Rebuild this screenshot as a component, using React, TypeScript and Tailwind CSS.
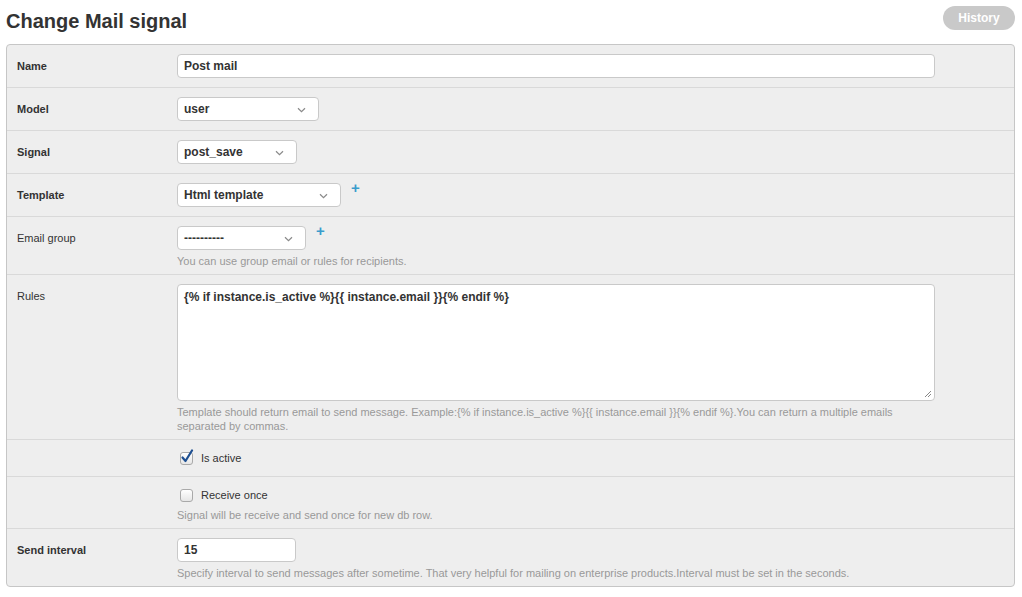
import React from "react";

const font = { fontFamily: '"Liberation Sans", Arial, sans-serif' };

function Chevron() {
  return (
    <svg width="9" height="6" viewBox="0 0 9 6" className="absolute right-[12px] top-[9px]">
      <path d="M1 1.2 L4.5 4.6 L8 1.2" fill="none" stroke="#8a8a8a" strokeWidth="1.2" />
    </svg>
  );
}

function Select({ value, width }: { value: string; width: string }) {
  return (
    <div className={`relative h-[24px] ${width} rounded-[4px] border border-[#c9c9c9] bg-white pl-[6px] text-[12px] font-bold leading-[22px] text-[#333]`}>
      {value}
      <Chevron />
    </div>
  );
}

function Plus() {
  return <span className="ml-[10px] -mt-[3px] text-[15px] font-bold leading-[15px] text-[#3a9ccc]">+</span>;
}

function Help({ children }: { children: React.ReactNode }) {
  return <p className="mt-[4px] max-w-[758px] text-[11px] leading-[14px] text-[#999]">{children}</p>;
}

function Row({ label, bold = true, last = false, children, pb = "pb-[9px]" }: { label: string; bold?: boolean; last?: boolean; children: React.ReactNode; pb?: string }) {
  return (
    <div className={`flex px-[10px] pt-[9px] ${pb} ${last ? "" : "border-b border-[#d9d9d9]"}`}>
      <div className={`w-[160px] shrink-0 text-[11px] leading-[24px] text-[#333] ${bold ? "font-bold" : ""}`}>{label}</div>
      <div className="flex-1">{children}</div>
    </div>
  );
}

function Checkbox({ checked }: { checked?: boolean }) {
  return (
    <span className="relative ml-[3px] inline-block h-[13px] w-[13px] rounded-[3px] border border-[#a9a9a9] bg-gradient-to-b from-white to-[#e6e6e6]">
      {checked && (
        <svg width="14" height="15" viewBox="0 0 14 15" className="absolute -left-[1px] -top-[4px]">
          <path d="M2.5 8.5 L5.5 12 L12 1.5" fill="none" stroke="#1d4f91" strokeWidth="2.2" strokeLinecap="round" strokeLinejoin="round" />
        </svg>
      )}
    </span>
  );
}

const rulesText = "{% if instance.is_active %}{{ instance.email }}{% endif %}";

export default function App() {
  return (
    <div className="min-h-[597px] bg-white px-[6px]" style={font}>
      <div className="flex h-[44px] items-start justify-between">
        <h1 className="pt-[9px] text-[20px] font-bold leading-[24px] text-[#333]">Change Mail signal</h1>
        <button className="mt-[6px] mr-[1px] h-[24px] w-[72px] rounded-full bg-[#c9c9c9] text-[12px] font-bold text-white">History</button>
      </div>
      <div className="w-[1009px] rounded-[4px] border border-[#c6c6c6] bg-[#eeeeee]">
        <Row label="Name">
          <div className="h-[24px] w-[758px] rounded-[4px] border border-[#c9c9c9] bg-white pl-[6px] text-[12px] font-bold leading-[22px] text-[#333]">Post mail</div>
        </Row>
        <Row label="Model">
          <Select value="user" width="w-[142px]" />
        </Row>
        <Row label="Signal">
          <Select value="post_save" width="w-[120px]" />
        </Row>
        <Row label="Template">
          <div className="flex items-start">
            <Select value="Html template" width="w-[164px]" />
            <Plus />
          </div>
        </Row>
        <Row label="Email group" bold={false} pb="pb-[6px]">
          <div className="flex items-start">
            <Select value="----------" width="w-[129px]" />
            <Plus />
          </div>
          <Help>You can use group email or rules for recipients.</Help>
        </Row>
        <Row label="Rules" bold={false} pb="pb-[6px]">
          <div className="relative h-[117px] w-[758px] rounded-[4px] border border-[#c9c9c9] bg-white px-[6px] pt-[4px] text-[12px] font-bold leading-[16px] text-[#333]">
            {rulesText}
            <svg width="8" height="8" viewBox="0 0 8 8" className="absolute bottom-[2px] right-[2px]">
              <path d="M7 1 L1 7 M7 4 L4 7" stroke="#888" strokeWidth="1" />
            </svg>
          </div>
          <Help>
            {"Template should return email to send message. Example:" + rulesText + ".You can return a multiple emails separated by commas."}
          </Help>
        </Row>
        <div className="flex border-b border-[#d9d9d9] px-[10px] py-[9px]">
          <div className="w-[160px] shrink-0" />
          <label className="flex h-[18px] items-center gap-[8px] text-[11px] text-[#333]">
            <Checkbox checked />
            Is active
          </label>
        </div>
        <div className="flex border-b border-[#d9d9d9] px-[10px] pt-[9px] pb-[6px]">
          <div className="w-[160px] shrink-0" />
          <div>
            <label className="flex h-[18px] items-center gap-[8px] text-[11px] text-[#333]">
              <Checkbox />
              Receive once
            </label>
            <Help>Signal will be receive and send once for new db row.</Help>
          </div>
        </div>
        <Row label="Send interval" last pb="pb-[6px]">
          <div className="h-[24px] w-[119px] rounded-[4px] border border-[#c9c9c9] bg-white pl-[6px] text-[12px] font-bold leading-[22px] text-[#333]">15</div>
          <Help>Specify interval to send messages after sometime. That very helpful for mailing on enterprise products.Interval must be set in the seconds.</Help>
        </Row>
      </div>
    </div>
  );
}
